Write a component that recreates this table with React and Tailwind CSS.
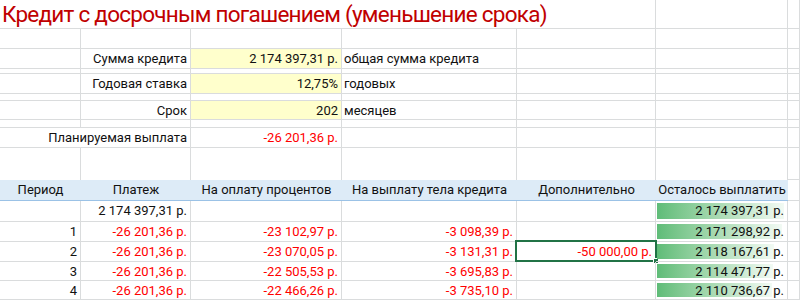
import React from "react";

const G = "border-[#dadcdd]";

function Cell({ w, r = true, b = true, className = "", children }) {
  return (
    <div
      className={[
        "shrink-0 h-full whitespace-nowrap leading-[20px]",
        w,
        r ? "border-r" : "",
        b ? "border-b" : "",
        G,
        className,
      ].join(" ")}
    >
      {children}
    </div>
  );
}

const A = "w-[81px]";
const B = "w-[110px]";
const Cc = "w-[151px]";
const D = "w-[175px]";
const E = "w-[139px]";
const F = "w-[132px]";
const Gc = "w-[12px]";

function Row({ h, children }) {
  return <div className={"flex " + h}>{children}</div>;
}

function EmptyRow({ h }) {
  return (
    <Row h={h}>
      <Cell w={A} />
      <Cell w={B} />
      <Cell w={Cc} />
      <Cell w={D} />
      <Cell w={E} />
      <Cell w={F} />
      <Cell w={Gc} />
    </Row>
  );
}

const R = "text-right pr-[3px]";
const red = "text-[#ff0000]";

const data = [
  { p: "", pay: "2 174 397,31 р.", payRed: false, pct: "", body: "", add: "", rest: "2 174 397,31 р.", bar: 127, h: "h-[21px]" },
  { p: "1", pay: "-26 201,36 р.", payRed: true, pct: "-23 102,97 р.", body: "-3 098,39 р.", add: "", rest: "2 171 298,92 р.", bar: 125, h: "h-[20px]" },
  { p: "2", pay: "-26 201,36 р.", payRed: true, pct: "-23 070,05 р.", body: "-3 131,31 р.", add: "-50 000,00 р.", rest: "2 118 167,61 р.", bar: 117, h: "h-[20px]", sel: true },
  { p: "3", pay: "-26 201,36 р.", payRed: true, pct: "-22 505,53 р.", body: "-3 695,83 р.", add: "", rest: "2 114 471,77 р.", bar: 116, h: "h-[19px]" },
  { p: "4", pay: "-26 201,36 р.", payRed: true, pct: "-22 466,26 р.", body: "-3 735,10 р.", add: "", rest: "2 110 736,67 р.", bar: 115, h: "h-[19px]" },
];

export default function App() {
  return (
    <div className="w-[800px] h-[301px] overflow-hidden bg-white font-['Roboto',sans-serif] text-[13px] text-[#111111]">
      {/* Title row */}
      <Row h="h-[29px]">
        <Cell w="w-[656px]" className="pl-[2px] leading-[28px] text-[22.5px] tracking-[-0.75px] text-[#c00000]">
          Кредит с досрочным погашением (уменьшение срока)
        </Cell>
        <Cell w={F} />
        <Cell w={Gc} />
      </Row>
      <EmptyRow h="h-[20px]" />
      <Row h="h-[20px]">
        <Cell w={A} />
        <Cell w={B} className={R}>Сумма кредита</Cell>
        <Cell w={Cc} className={R + " bg-[#ffffcc]"}>2 174 397,31 р.</Cell>
        <Cell w={D} className="pl-[2px]">общая сумма кредита</Cell>
        <Cell w={E} />
        <Cell w={F} />
        <Cell w={Gc} />
      </Row>
      <EmptyRow h="h-[5px]" />
      <Row h="h-[20px]">
        <Cell w={A} />
        <Cell w={B} className={R}>Годовая ставка</Cell>
        <Cell w={Cc} className={R + " bg-[#ffffcc]"}>12,75%</Cell>
        <Cell w={D} className="pl-[2px]">годовых</Cell>
        <Cell w={E} />
        <Cell w={F} />
        <Cell w={Gc} />
      </Row>
      <EmptyRow h="h-[7px]" />
      <Row h="h-[19px]">
        <Cell w={A} />
        <Cell w={B} className={R + " leading-[19px]"}>Срок</Cell>
        <Cell w={Cc} className={R + " leading-[19px] bg-[#ffffcc]"}>202</Cell>
        <Cell w={D} className="pl-[2px] leading-[19px]">месяцев</Cell>
        <Cell w={E} />
        <Cell w={F} />
        <Cell w={Gc} />
      </Row>
      <EmptyRow h="h-[8px]" />
      <Row h="h-[20px]">
        <Cell w="w-[191px]" className={R}>Планируемая выплата</Cell>
        <Cell w={Cc} className={R + " " + red}>-26 201,36 р.</Cell>
        <Cell w={D} />
        <Cell w={E} />
        <Cell w={F} />
        <Cell w={Gc} />
      </Row>
      <Row h="h-[32px]">
        <Cell w={A} b={false} />
        <Cell w={B} b={false} />
        <Cell w={Cc} b={false} />
        <Cell w={D} b={false} />
        <Cell w={E} b={false} />
        <Cell w={F} b={false} />
        <Cell w={Gc} />
      </Row>
      {/* Header */}
      <Row h="h-[21px]">
        <div className="flex w-[788px] shrink-0 bg-[#ddebf7] border-b border-[#9bc2e6] leading-[20px] text-center whitespace-nowrap">
          <div className="w-[81px] shrink-0">Период</div>
          <div className="w-[110px] shrink-0">Платеж</div>
          <div className="w-[151px] shrink-0">На оплату процентов</div>
          <div className="w-[175px] shrink-0">На выплату тела кредита</div>
          <div className="w-[139px] shrink-0">Дополнительно</div>
          <div className="w-[132px] shrink-0">Осталось выплатить</div>
        </div>
        <Cell w={Gc} />
      </Row>
      {data.map((d, i) => (
        <Row key={i} h={d.h}>
          <Cell w={A} className={R}>{d.p}</Cell>
          <Cell w={B} className={R + (d.payRed ? " " + red : "")}>{d.pay}</Cell>
          <Cell w={Cc} className={R + " " + red}>{d.pct}</Cell>
          <Cell w={D} className={R + " " + red}>{d.body}</Cell>
          <Cell w={E} className={"relative " + R + " " + red}>
            {d.add}
            {d.sel && (
              <div className="absolute left-[-2px] top-[-2px] w-[142px] h-[22px] border-2 border-[#217346]">
                <div className="absolute right-[-4px] bottom-[-4px] w-[6px] h-[6px] bg-[#217346] border border-white" />
              </div>
            )}
          </Cell>
          <Cell w={F} className="relative pr-[3px]">
            <div
              className="absolute left-[1px] top-[2px] bottom-[2px] bg-linear-to-r from-[#5fbc78] to-[#f2faf4]"
              style={{ width: d.bar }}
            />
            <div className="relative text-right">{d.rest}</div>
          </Cell>
          <Cell w={Gc} />
        </Row>
      ))}
    </div>
  );
}
